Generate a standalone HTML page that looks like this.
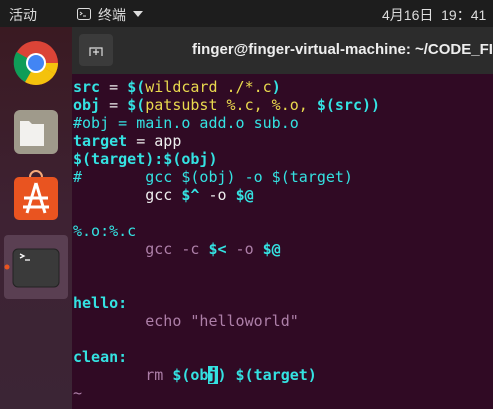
<!DOCTYPE html>
<html><head><meta charset="utf-8"><style>
*{margin:0;padding:0;box-sizing:border-box}
body{width:493px;height:409px;overflow:hidden;background:#300a24;position:relative;font-family:"Liberation Sans","Noto Sans CJK SC",sans-serif}
#top{position:absolute;left:0;top:0;width:493px;height:27px;background:#1d1d1d;color:#ddd;font-size:14px}
#top span{position:absolute;top:5px}
#dock{position:absolute;left:0;top:27px;width:72px;height:382px;background:linear-gradient(180deg,#3a1a22,#3e2233 50%,#3b2535)}
#hdr{position:absolute;left:72px;top:27px;width:421px;height:47px;background:#2c2c2c;overflow:hidden}
#btn{position:absolute;left:7px;top:7px;width:34px;height:32px;background:#3b3b3b;border-radius:4px}
#title{position:absolute;left:120px;top:14px;color:#eee;font-weight:bold;font-size:15px;white-space:nowrap}
#term{position:absolute;left:73px;top:78px;font-family:"DejaVu Sans Mono",monospace;font-size:15px;line-height:18px;color:#eee;white-space:pre}
.c{color:#34e2e2;font-weight:bold}.cn{color:#34e2e2}.y{color:#e9d94e}.p{color:#ad7fa8}.w{color:#eeeeec}
.cur{background:#34e2e2;color:#300a24}
</style></head><body>
<div id="top"><span style="left:9px">活动</span>
<svg style="position:absolute;left:77px;top:8px" width="14" height="12"><rect x="0.5" y="0.5" width="13" height="11" rx="2" fill="none" stroke="#ddd"/><path d="M3 4l2 1.5-2 1.5M6 8h3" stroke="#ddd" fill="none"/></svg>
<span style="left:98px">终端</span>
<svg style="position:absolute;left:133px;top:11px" width="10" height="6"><path d="M0 0h10L5 6z" fill="#ddd"/></svg>
<span style="left:382px">4月16日&nbsp; 19：41</span></div>
<div id="dock">
<div style="position:absolute;left:4px;top:208px;width:64px;height:64px;background:#5a3f52;border-radius:4px"></div>
<svg style="position:absolute;left:0;top:0" width="72" height="382">
<circle cx="36" cy="36" r="22" fill="#db4437"/>
<path d="M36 36L55 47A22 22 0 0 1 25 55Z" fill="#f4c20d"/>
<path d="M36 36L25 55A22 22 0 0 1 16.5 25Z" fill="#0f9d58"/>
<path d="M36 36L55 47A22 22 0 0 0 58 36Z" fill="#f4c20d"/>
<circle cx="36" cy="36" r="10" fill="#fff"/><circle cx="36" cy="36" r="8" fill="#4285f4"/>
<rect x="14" y="83" width="44" height="44" rx="6" fill="#9f9a8b"/>
<path d="M20 94h9l3 3h12v22H20z" fill="#f2f1ee"/>
<path d="M30 150a6 6 0 0 1 12 0" fill="none" stroke="#f5a97a" stroke-width="2"/>
<rect x="14" y="150" width="44" height="43" rx="5" fill="#e95420"/>
<path d="M36 156l-9 30M36 156l9 30M24 171h24M23 180h26" stroke="#fff" stroke-width="3" fill="none"/>
<rect x="13" y="222" width="46" height="38" rx="5" fill="#3a3a3a" stroke="#222" stroke-width="1"/>
<path d="M20 227l4 2-4 2M25 233h5" stroke="#fff" stroke-width="1.3" fill="none"/>
<circle cx="7" cy="240" r="2.5" fill="#e95420"/>
</svg></div>
<div id="hdr"><div id="btn"><svg width="34" height="32"><path d="M11 22v-8h12v8M17 15v6M14 18h6" stroke="#ddd" stroke-width="1.2" fill="none"/></svg></div>
<div id="title">finger@finger-virtual-machine: ~/CODE_FILE</div></div>
<div id="term"><span class="c">src</span> = <span class="c">$(</span><span class="y">wildcard ./*.c</span><span class="c">)</span>
<span class="c">obj</span> = <span class="c">$(</span><span class="y">patsubst %.c, %.o, </span><span class="c">$(src))</span>
<span class="cn">#obj = main.o add.o sub.o</span>
<span class="c">target</span> = app
<span class="c">$(target):$(obj)</span>
<span class="cn">#       gcc $(obj) -o $(target)</span>
        gcc <span class="c">$^</span> -o <span class="c">$@</span>

<span class="cn">%.o:%.c</span>
<span class="p">        gcc -c </span><span class="c">$&lt;</span><span class="p"> -o </span><span class="c">$@</span>


<span class="c">hello:</span>
<span class="p">        echo "helloworld"</span>

<span class="c">clean:</span>
<span class="p">        rm </span><span class="c">$(ob<span class="cur">j</span>) $(target)</span>
<span class="p">~</span></div>
</body></html>
